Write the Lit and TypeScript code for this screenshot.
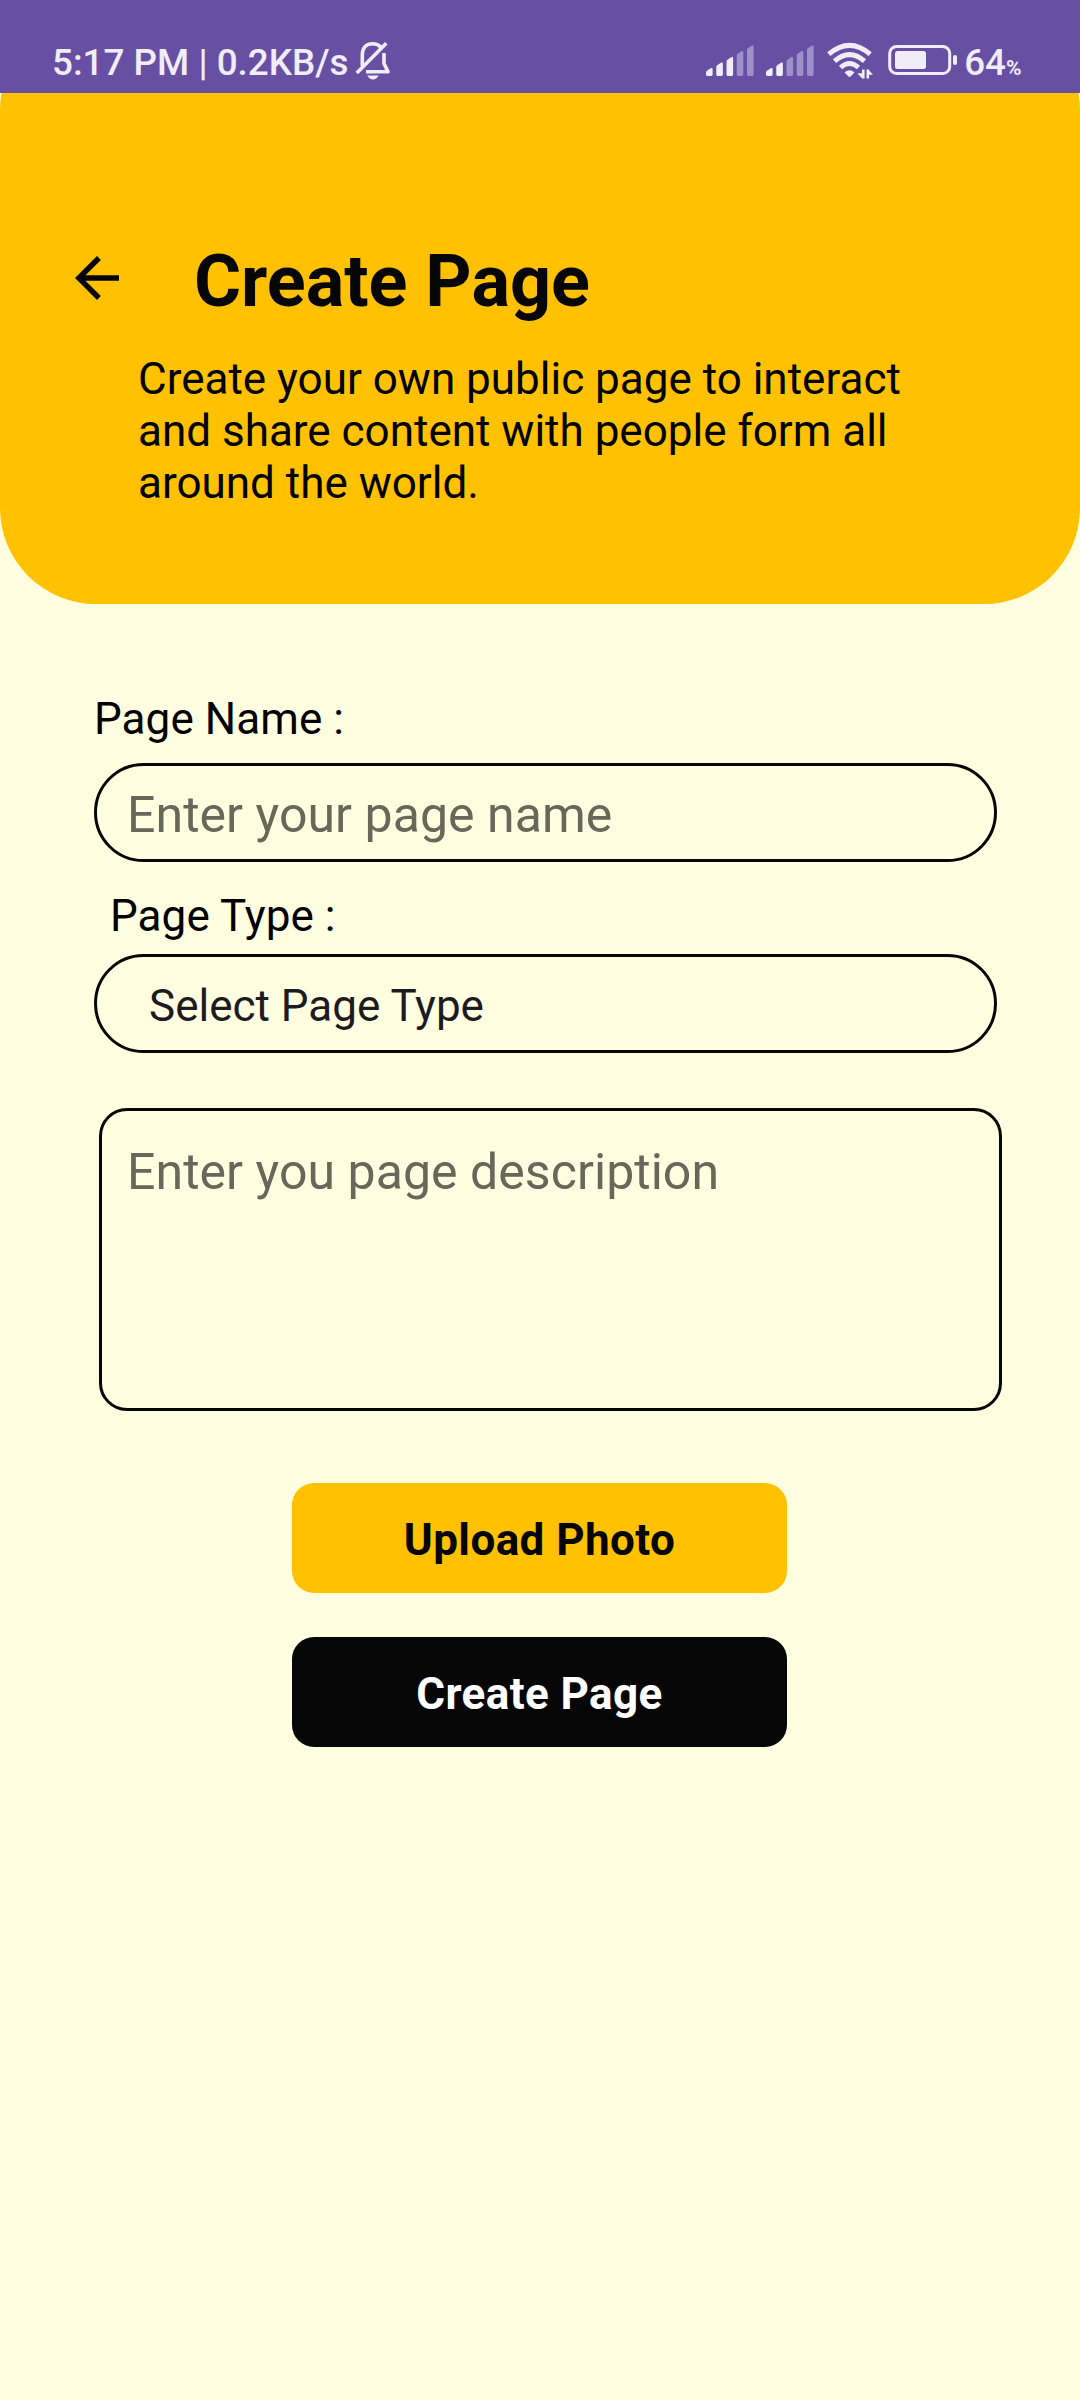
import { LitElement, html, css, svg } from "lit";
import { customElement, property } from "lit/decorators.js";

@customElement("signal-bars")
class SignalBars extends LitElement {
  @property({ type: Number }) level = 0;

  static styles = css`
    :host { display: block; width: 48px; height: 32px; }
    .bars { display: block; }
    .on { fill: #f0ecf8; }
    .off { fill: #a08fc9; }
  `;

  render() {
    const heights = [8, 13.5, 19, 25, 30.5];
    return html`<svg class="bars" width="48" height="32" viewBox="0 0 48 32">
      ${heights.map((h, i) => {
        const x = i * 10.25;
        const t = 31 - h;
        return svg`<path class=${i < this.level ? "on" : "off"}
          d="M${x} ${t + 4.5}q0-1.2 1-1.8l3.6-2.4q2-1 2 .8V29.6q0 1.4-1.4 1.4H${x + 1.4}q-1.4 0-1.4-1.4z"/>`;
      })}
    </svg>`;
  }
}

@customElement("status-bar")
class StatusBar extends LitElement {
  static styles = css`
    :host {
      display: flex;
      box-sizing: border-box;
      height: 93px;
      padding: 41px 58.5px 0 52px;
      background: #6750a3;
      color: #f0ecf8;
      font: 500 36.8px/42px Roboto, sans-serif;
      justify-content: space-between;
      align-items: flex-start;
    }
    .left, .right { display: flex; align-items: flex-start; }
    .time { white-space: pre; padding-top: 1px; }
    .bell { margin-left: 6.5px; }
    .second { margin-left: 12px; }
    .first, .second { margin-top: 4px; }
    .wifi { margin-left: 12px; }
    .battery { margin: 3px 0 0 14px; }
    .percent { display: flex; align-items: baseline; margin-left: 6.5px; padding-top: 1px; }
    .sign { font-size: 21px; font-weight: 700; }
  `;

  render() {
    return html`
      <div class="left">
        <span class="time">5:17 PM | 0.2KB/s</span>
        <svg class="bell" width="36" height="40" viewBox="0 0 36 40" fill="none" stroke="#f0ecf8" stroke-width="3.6">
          <path d="M7.300 25V14C7.300 6.500 11.500 2.800 17.800 2.800C21 2.800 24 4 26 6.200"/>
          <path d="M29 12V22.500L33 30.800H11" stroke-linejoin="round"/>
          <path d="M1.800 32L31.300 2.300"/>
          <path d="M12.300 34.500H23.700Q21.500 38.500 18 38.500T12.300 34.500Z" fill="#f0ecf8" stroke="none"/>
        </svg>
      </div>
      <div class="right">
        <signal-bars class="first" .level=${3}></signal-bars>
        <signal-bars class="second" .level=${2}></signal-bars>
        <svg class="wifi" width="48" height="40" viewBox="0 0 48 40" fill="none" stroke="#f0ecf8" stroke-width="4.900">
          <path d="M2.800 13.200Q23.500-4.500 44.200 13.200"/>
          <path d="M8.500 20.200Q23.500 7 38.500 20.200"/>
          <path d="M14.500 26.500Q23.500 18.500 32.500 26.500"/>
          <path d="M18.500 31.500Q23.500 27 28.500 31.500L24.500 35.500Q23.500 36.300 22.500 35.500Z" fill="#f0ecf8" stroke="none"/>
          <path d="M37.300 37.500V28.500M41.800 28.500V37.500" stroke-width="2.600"/>
          <path d="M31.300 32.200L36.500 37.800V32.200ZM47 33.800L42 28.200V33.800Z" fill="#f0ecf8" stroke="none"/>
        </svg>
        <svg class="battery" width="70" height="32" viewBox="0 0 70 32">
          <rect x="1.700" y="2.500" width="60" height="27" rx="7" fill="none" stroke="#f0ecf8" stroke-width="3"/>
          <rect x="7" y="7" width="31" height="18" rx="2.500" fill="#f0ecf8"/>
          <rect x="65" y="11" width="4" height="10" rx="2" fill="#f0ecf8"/>
        </svg>
        <div class="percent"><span>64</span><span class="sign">%</span></div>
      </div>
    `;
  }
}

@customElement("app-root")
class AppRoot extends LitElement {
  static styles = css`
    :host {
      display: block;
      min-height: 2400px;
      background: #fffee0;
      color: #060606;
      font: 400 44px/52px Roboto, sans-serif;
    }
    .status { position: relative; z-index: 1; }
    .header {
      box-sizing: border-box;
      height: 590px;
      margin-top: -79px;
      padding: 225px 0 0 64px;
      border-radius: 96px;
      background: #ffc100;
    }
    .bar { display: flex; gap: 64px; align-items: flex-start; }
    .back { margin-top: 6px; }
    .title { margin: 1px 0 0; font: 700 72px/84px Roboto, sans-serif; }
    .intro { width: 800px; margin: 29px 0 0 74px; line-height: 52px; color: #000; }
    .form { display: flex; flex-direction: column; align-items: flex-start; padding: 89px 0 0 94px; }
    .label { color: #000; letter-spacing: 0.08px; }
    .type-label { margin: 28px 0 0 16px; }
    .field {
      box-sizing: border-box;
      display: block;
      width: 903px;
      height: 99px;
      margin: 18px 0 0;
      border: 3px solid #060600;
      border-radius: 50px;
      background: none;
      outline: none;
      padding: 5px 30px 0;
      font: 400 50px/58px Roboto, sans-serif;
      color: #1c1b1f;
    }
    .field::placeholder { color: #67675a; opacity: 1; letter-spacing: 0.05px; }
    .select { margin-top: 12px; padding: 23px 52px 0; font-size: 44px; line-height: 52px; }
    .area { height: 303px; margin: 55px 0 0 5px; padding: 32px 25px 0; border-radius: 28px; resize: none; }
    .actions { display: flex; flex-direction: column; gap: 44px; align-items: flex-start; margin: 72px 0 0 292px; }
    .button {
      width: 495px;
      height: 110px;
      padding: 4px 0 0;
      border: none;
      border-radius: 22px;
      background: #ffc100;
      color: #060606;
      font: 700 44px/52px Roboto, sans-serif;
      letter-spacing: 0.42px;
    }
    .primary { background: #060606; color: #fff; }
  `;

  render() {
    return html`
      <status-bar class="status"></status-bar>
      <header class="header">
        <div class="bar">
          <svg class="back" width="66" height="66" viewBox="0 0 24 24" fill="#060606">
            <path d="M20 11H7.830l5.590-5.590L12 4l-8 8 8 8 1.410-1.410L7.830 13H20v-2z"/>
          </svg>
          <h1 class="title">Create Page</h1>
        </div>
        <p class="intro">Create your own public page to interact and share content with people form all around the world.</p>
      </header>
      <main class="form">
        <label class="label">Page Name :</label>
        <input class="field" placeholder="Enter your page name">
        <label class="label type-label">Page Type :</label>
        <div class="field select">Select Page Type</div>
        <textarea class="field area" placeholder="Enter you page description"></textarea>
      </main>
      <div class="actions">
        <button class="button">Upload Photo</button>
        <button class="button primary">Create Page</button>
      </div>
    `;
  }
}
